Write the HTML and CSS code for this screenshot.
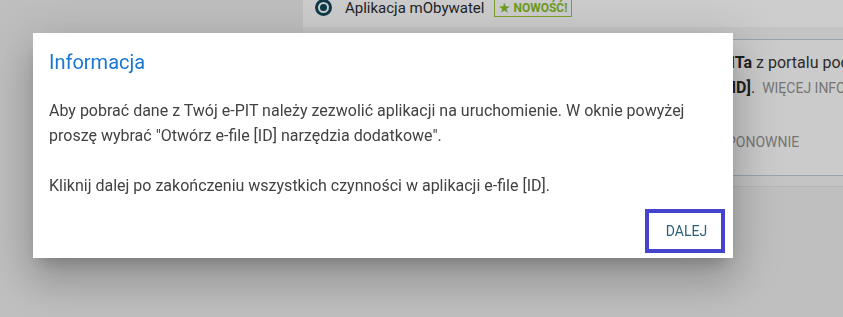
FILE: index.html
```html
<!DOCTYPE html>
<html lang="pl">
<head>
  <meta charset="UTF-8">
  <title>Informacja</title>
  <link rel="stylesheet" href="styles.css">
</head>
<body>

  <div class="strona">
    <div class="kolumna">
      <div class="wybor">
        <span class="radio"><span class="kropka"></span></span>
        <span class="etykieta">Aplikacja mObywatel</span>
        <span class="nowosc">&#9733; NOWOŚĆ!</span>
      </div>
      <div class="pasek"></div>
      <div class="karta">
        <div class="linia"><b>e-PITa</b> z portalu podatkowego</div>
        <div class="linia druga"><b>[ID]</b>. <span class="wiecej">WIĘCEJ INFORMACJI</span></div>
        <div class="linia trzecia"><span class="ponow">PONOWNIE</span></div>
      </div>
      <div class="pasek dolny"></div>
    </div>
  </div>

  <div class="okno">
    <h2>Informacja</h2>
    <p class="tresc">
      Aby pobrać dane z Twój e-PIT należy zezwolić aplikacji na uruchomienie. W oknie powyżej proszę wybrać "Otwórz e-file [ID] narzędzia dodatkowe".<br><br>
      Kliknij dalej po zakończeniu wszystkich czynności w aplikacji e-file [ID].
    </p>
    <div class="akcje">
      <button>DALEJ</button>
    </div>
  </div>

</body>
</html>
```

FILE: styles.css
```css
body {
  margin: 0;
  height: 317px;
  overflow: hidden;
  font-family: Roboto, "Liberation Sans", sans-serif;
  background-color: #bfbfbf;
  color: #222;
}

.kolumna {
  margin-left: 303px;
  margin-top: -12px;
}

.wybor {
  height: 39px;
  background-color: #cdcdcd;
  display: flex;
  align-items: center;
  padding-left: 12px;
}

.radio {
  width: 17px;
  height: 17px;
  box-sizing: border-box;
  border: 3px solid #0d3a4a;
  border-radius: 50%;
  display: flex;
  align-items: center;
  justify-content: center;
}

.kropka {
  width: 7px;
  height: 7px;
  border-radius: 50%;
  background-color: #0d3a4a;
}

.etykieta {
  margin-left: 13px;
  font-size: 15px;
  color: #1d2326;
}

.nowosc {
  margin-left: 10px;
  border: 1px solid #7ca22c;
  padding: 1px 4px;
  font-size: 12px;
  font-weight: bold;
  color: #6e9a22;
}

.pasek {
  height: 12px;
  background-color: #c4c4c4;
}

.pasek.dolny {
  height: 10px;
  border-bottom: 1px solid #b6b6b6;
}

.karta {
  height: 125px;
  background-color: #cbcbcb;
  border-top: 1px solid #98a4b0;
  border-bottom: 1px solid #98a4b0;
  padding-top: 10px;
  padding-left: 402px;
  white-space: nowrap;
  font-size: 16px;
  color: #2c2c2c;
}

.linia {
  line-height: 25px;
}

.linia b {
  color: #1f1f1f;
}

.druga {
  padding-left: 22px;
}

.wiecej {
  margin-left: 3px;
  font-size: 14px;
  color: #767676;
}

.trzecia {
  margin-top: 28px;
  padding-left: 22px;
}

.ponow {
  font-size: 14px;
  color: #767676;
}

.okno {
  position: fixed;
  left: 33px;
  top: 33px;
  width: 700px;
  background: #fff;
  box-shadow: 0 11px 15px -7px rgba(0,0,0,0.2), 0 24px 38px 3px rgba(0,0,0,0.14), 0 9px 46px 8px rgba(0,0,0,0.12);
}

.okno h2 {
  margin: 0;
  padding: 17px 16px 0;
  font-size: 20px;
  line-height: 24px;
  font-weight: normal;
  color: #1976d2;
}

.tresc {
  margin: 24px 0 0;
  padding: 0 16px;
  font-size: 16px;
  line-height: 25px;
  color: #424242;
}

.akcje {
  display: flex;
  justify-content: flex-end;
  padding: 11px 8px 5px 0;
}

.akcje button {
  width: 80px;
  height: 44px;
  border: 4px solid #4444cc;
  background: #fff;
  padding: 0 0 0 3px;
  font-family: Roboto, "Liberation Sans", sans-serif;
  font-size: 14px;
  color: #2b6079;
  cursor: pointer;
}
```
